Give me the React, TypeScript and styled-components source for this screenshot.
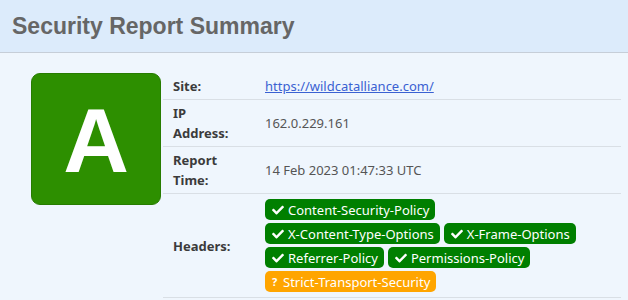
import { createGlobalStyle, styled } from "styled-components";

const GlobalStyle = createGlobalStyle`
  body {
    margin: 0;
    background: #eff6fd;
    font-family: "Noto Sans", "Open Sans", sans-serif;
  }
`;

type Header = { name: string; ok: boolean };

const headerRows: Header[][] = [
  [{ name: "Content-Security-Policy", ok: true }],
  [
    { name: "X-Content-Type-Options", ok: true },
    { name: "X-Frame-Options", ok: true },
  ],
  [
    { name: "Referrer-Policy", ok: true },
    { name: "Permissions-Policy", ok: true },
  ],
  [{ name: "Strict-Transport-Security", ok: false }],
];

const CheckIcon = () => (
  <svg width="12" height="10" viewBox="0 0 512 400" aria-hidden>
    <path
      fill="currentColor"
      d="M173.9 389.8L7.5 223.4c-10-10-10-26.2 0-36.2l36.2-36.2c10-10 26.2-10 36.2 0L192 263.1 432.1 23c10-10 26.2-10 36.2 0l36.2 36.2c10 10 10 26.2 0 36.2L210.1 389.8c-10 10-26.2 10-36.2 0z"
    />
  </svg>
);

const App = () => {
  return (
    <>
      <GlobalStyle />
      <TitleBar>
        <Title>Security Report Summary</Title>
      </TitleBar>
      <Content>
        <GradeBox>A</GradeBox>
        <InfoTable>
          <tbody>
            <Row>
              <Label>Site:</Label>
              <Value>
                <SiteLink href="#">https://wildcatalliance.com/</SiteLink>
              </Value>
            </Row>
            <Row>
              <Label>
                IP
                <br />
                Address:
              </Label>
              <Value>162.0.229.161</Value>
            </Row>
            <Row>
              <Label>
                Report
                <br />
                Time:
              </Label>
              <Value>14 Feb 2023 01:47:33 UTC</Value>
            </Row>
            <Row>
              <Label>Headers:</Label>
              <Value>
                <BadgeList>
                  {headerRows.map((row, i) => (
                    <BadgeLine key={i}>
                      {row.map((h) => (
                        <Badge key={h.name} $ok={h.ok}>
                          {h.ok ? <CheckIcon /> : <Question>?</Question>}
                          {h.name}
                        </Badge>
                      ))}
                    </BadgeLine>
                  ))}
                </BadgeList>
              </Value>
            </Row>
          </tbody>
        </InfoTable>
      </Content>
    </>
  );
};

export default App;

const TitleBar = styled.div`
  background: #dcebfb;
  border-bottom: 1px solid #c6ced8;
  height: 52px;
  display: flex;
  align-items: center;
  padding-left: 12px;
`;

const Title = styled.h1`
  margin: 0;
  font-family: "Liberation Sans", Arial, sans-serif;
  font-size: 23px;
  font-weight: bold;
  color: #666;
`;

const Content = styled.div`
  display: flex;
  align-items: flex-start;
  gap: 2px;
  padding: 20px 7px 0 31px;
`;

const GradeBox = styled.div`
  width: 128px;
  height: 128px;
  flex-shrink: 0;
  background: #2d8f00;
  border: 1px solid #277c00;
  border-radius: 9px;
  display: flex;
  align-items: center;
  justify-content: center;
  color: #fff;
  font-family: "Liberation Sans", Arial, sans-serif;
  font-weight: bold;
  font-size: 91px;
  line-height: 1;
  padding-top: 2px;
  box-sizing: content-box;
`;

const InfoTable = styled.table`
  flex: 1;
  border-collapse: collapse;
  font-size: 13px;
  line-height: 20px;
`;

const Row = styled.tr`
  border-bottom: 1px solid #d9dfe5;
`;

const Label = styled.th`
  width: 82px;
  text-align: left;
  padding: 3px 10px;
  font-weight: bold;
  color: #3b3b3b;
`;

const Value = styled.td`
  padding: 3px 0;
  color: #555;
`;

const SiteLink = styled.a`
  color: #3a61d2;
  text-decoration: underline;
`;

const BadgeList = styled.div`
  display: flex;
  flex-direction: column;
  gap: 3px;
  padding: 2px 0 2px;
`;

const BadgeLine = styled.div`
  display: flex;
  gap: 4px;
`;

const Badge = styled.span<{ $ok: boolean }>`
  display: inline-flex;
  align-items: center;
  gap: 4px;
  height: 21px;
  padding: 0 6px 0 7px;
  border-radius: 5px;
  background: ${(p) => (p.$ok ? "#007f00" : "#ffa500")};
  color: #fff;
  font-size: 13px;
`;

const Question = styled.span`
  font-weight: bold;
  font-size: 11px;
  width: 7px;
`;
